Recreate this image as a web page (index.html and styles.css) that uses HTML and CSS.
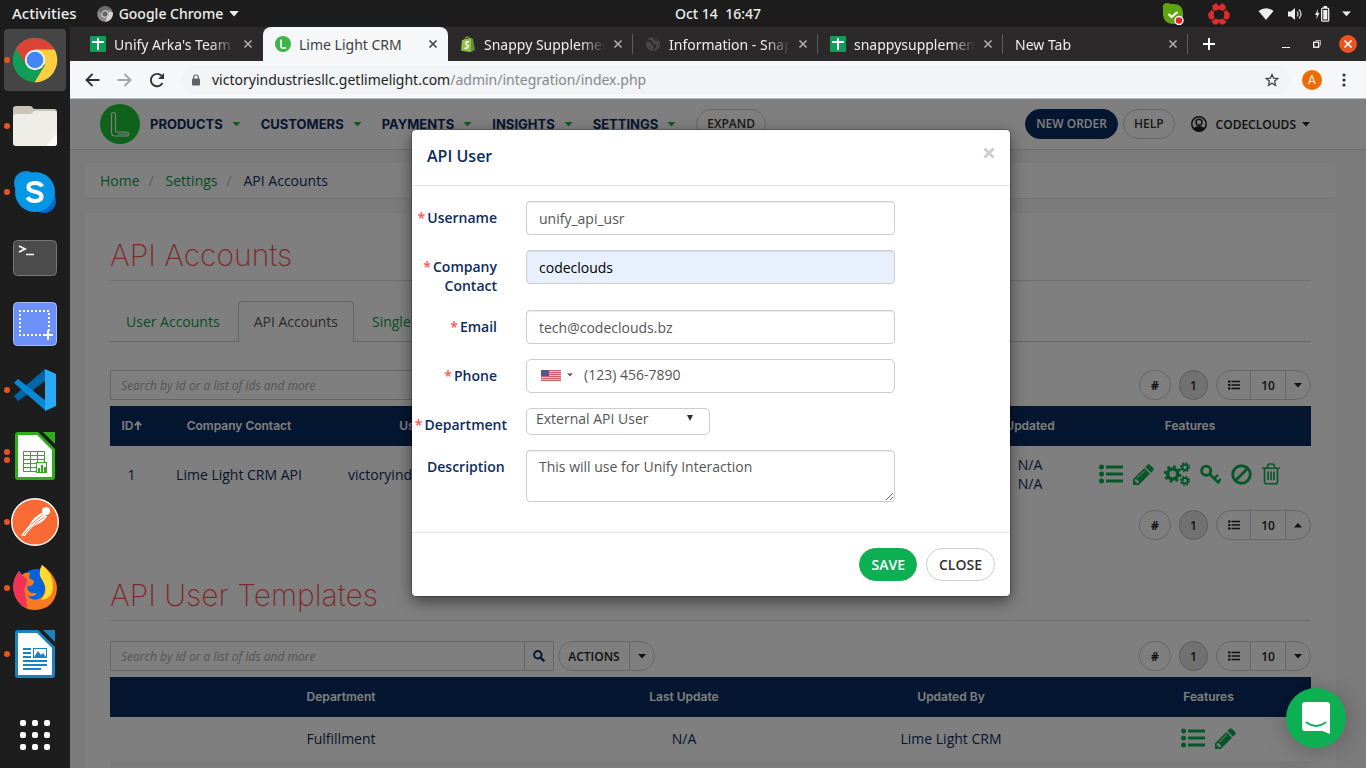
FILE: index.html
```html
<!DOCTYPE html>
<html lang="en">
<head>
<meta charset="utf-8">
<title>Lime Light CRM</title>
<link rel="stylesheet" href="styles.css">
</head>
<body>
<svg class="sprite" aria-hidden="true">
  <symbol id="x" viewBox="0 0 10 10"><path d="M1.500 1.500l7 7M8.500 1.500l-7 7" stroke="currentColor" stroke-width="1.700" fill="none"/></symbol>
  <symbol id="caret" viewBox="0 0 8 5"><path d="M0 0h8L4 4.600z" fill="currentColor"/></symbol>
  <symbol id="caret-up" viewBox="0 0 8 5"><path d="M0 4.600h8L4 0z" fill="currentColor"/></symbol>
  <symbol id="sheet" viewBox="0 0 16 16"><rect width="16" height="16" rx="1" fill="#0f9d58"/><path d="M2 6h12M8 2v12" stroke="#fff" stroke-width="2"/></symbol>
  <symbol id="list" viewBox="0 0 24 20"><g fill="currentColor"><circle cx="2.500" cy="3" r="2.500"/><circle cx="2.500" cy="10" r="2.500"/><circle cx="2.500" cy="17" r="2.500"/><path d="M7 1.500h17v3H7zM7 8.500h17v3H7zM7 15.500h17v3H7z"/></g></symbol>
  <symbol id="pencil" viewBox="128 128 1536 1536"><path fill="currentColor" d="M491 1536l91-91-235-235-91 91v107h128v128h107zm523-928q0-22-22-22-10 0-17 7l-542 542q-7 7-7 17 0 22 22 22 10 0 17-7l542-542q7-7 7-17zm-54-192l416 416-832 832h-416v-416zm683 96q0 53-37 90l-166 166-416-416 166-165q36-38 90-38 53 0 91 38l235 234q37 39 37 91z"/></symbol>
  <symbol id="gears" viewBox="0 0 26 24"><g fill="none" stroke="currentColor"><circle cx="8.700" cy="12" r="5" stroke-width="3.600"/><circle cx="8.700" cy="12" r="7.400" stroke-width="2.800" stroke-dasharray="2.900 2.911"/><circle cx="21" cy="5.200" r="2.700" stroke-width="2"/><circle cx="21" cy="5.200" r="4.200" stroke-width="1.800" stroke-dasharray="1.800 1.499"/><circle cx="21" cy="18.800" r="2.700" stroke-width="2"/><circle cx="21" cy="18.800" r="4.200" stroke-width="1.800" stroke-dasharray="1.800 1.499"/></g></symbol>
  <symbol id="key" viewBox="0 0 22 22"><g fill="none" stroke="currentColor"><circle cx="6.500" cy="7" r="4.800" stroke-width="3"/><path d="M10 10.500l10 9.800" stroke-width="2.800"/><path d="M14.800 15.500l4-4M18.500 19l3.500-3.500" stroke-width="2.600"/></g></symbol>
  <symbol id="ban" viewBox="0 0 22 22"><g fill="none" stroke="currentColor" stroke-width="3"><circle cx="11" cy="11" r="9.200"/><path d="M5 17L17 5"/></g></symbol>
  <symbol id="trash" viewBox="0 0 18 22"><g fill="none" stroke="currentColor" stroke-width="1.600"><path d="M0 5.300h18M2.500 5.300v13.200q0 2.300 1.800 2.300h9.400q1.800 0 1.800-2.300V5.300M5 5l1-3q.4-1 1.400-1h3.200q1 0 1.400 1l1 3M6 8.500v8.500M9 8.500v8.500M12 8.500v8.500"/></g></symbol>
  <symbol id="search" viewBox="0 0 12 12"><circle cx="4.800" cy="4.800" r="3.700" fill="none" stroke="currentColor" stroke-width="2"/><path d="M7.500 7.500l3.800 3.800" stroke="currentColor" stroke-width="2.300"/></symbol>
</svg>

<header class="topbar">
  <button class="top-item activities">Activities</button>
  <button class="top-item app-menu">
    <svg width="16" height="16" viewBox="0 0 16 16"><circle cx="8" cy="8" r="7.800" fill="#8b8b8b"/><path d="M8 4h7A8 8 0 0 0 1.600 4L5 9.500z" fill="#6a6a6a"/><path d="M11.500 6h4.200A8 8 0 0 1 8 15.800L11.500 9z" fill="#d4d4d4"/><circle cx="8" cy="8" r="3.300" fill="#666" stroke="#ddd" stroke-width="1"/></svg>
    Google Chrome
    <svg width="10" height="6" viewBox="0 0 8 5"><use href="#caret"/></svg>
  </button>
  <time class="clock">Oct 14&nbsp; 16:47</time>
  <div class="tray">
    <svg class="tray-skype" width="22" height="22" viewBox="0 0 22 22"><path d="M1 6Q0 1 4 0Q7 0 9 1Q21 0 21 10Q22 21 12 21Q2 21 1 12z" fill="#5fa512"/><path d="M6.500 11l3 3 6-5" stroke="#fff" stroke-width="2.200" fill="none"/><circle cx="17" cy="17.500" r="4" fill="#e22" stroke="#fff" stroke-width="1.400"/></svg>
    <svg class="tray-ring" width="22" height="22" viewBox="0 0 22 22" fill="#dc2d2d"><path d="M4.500 2.500L8 0l3 3 3-3 3.500 2.500v4l-3 1.500q-3.500-3-7 0l-3-1.500z"/><path d="M3.500 7l2.700 2q-1.200 3 .3 5.500L4.500 17 1 15.500 0 11zM18.500 7l-2.700 2q1.200 3-.3 5.500l2 2.500 3.500-1.500 1-4.500z"/><path d="M7.500 15.500q3.500 2 7 0l4 3-2.500 3h-3l-2-2-2 2H6l-2.500-3z"/></svg>
    <svg width="16" height="12" viewBox="0 0 16 12"><path d="M.5 3Q8-2.500 15.500 3L8 12z" fill="#eee"/></svg>
    <svg class="tray-volume" width="15" height="14" viewBox="0 0 15 14"><path d="M0 4.500h3L7 1v12L3 9.500H0z" fill="#eee"/><path d="M9 4.500q2 2.500 0 5M11 2.500q4 4.500 0 9" fill="none" stroke="#ddd" stroke-width="1.200"/></svg>
    <svg class="tray-battery" width="15" height="16" viewBox="0 0 15 16"><path d="M3 3L0 9h2l-.8 4.500L4.500 7H2.600z" fill="#eee"/><rect x="6.700" y="2.200" width="7" height="13" rx="1" fill="none" stroke="#eee" stroke-width="1.300"/><path d="M8.500 0h3.500v2H8.500zM8.300 4h4v9.500h-4z" fill="#eee"/></svg>
    <svg width="9" height="6" viewBox="0 0 8 5"><use href="#caret"/></svg>
  </div>
</header>

<div class="desktop">
  <nav class="dock" aria-label="Dock">
    <button class="dock-item active one" aria-label="Google Chrome"><svg width="46" height="46" viewBox="0 0 46 46"><circle cx="23" cy="23" r="22.300" fill="#109d58"/><path d="M4 11.500A22.300 22.300 0 0 1 42.500 12.500H23L13.500 27z" fill="#db4437"/><path d="M23 12.500h19.600A22.300 22.300 0 0 1 22.500 45.300L33 28z" fill="#ffcd40"/><circle cx="23" cy="23" r="10.200" fill="#f1f1f1"/><circle cx="23" cy="23" r="8.300" fill="#4285f4"/></svg></button>
    <button class="dock-item one" aria-label="Files"><svg width="46" height="42" viewBox="0 0 46 42"><path d="M1 4q0-3 3-3h14q2 0 3 2l1 1h20q3 0 3 3v10H1z" fill="#c9c5b6"/><path d="M1 12q0-3 3-3h14q2 0 3-2 1-1 3-1h18q3 0 3 3v29q0 3-3 3H4q-3 0-3-3z" fill="#efede8"/><path d="M34 41l11-13v10q0 3-3 3z" fill="#fbfbf9"/></svg></button>
    <button class="dock-item one" aria-label="Skype"><svg width="44" height="44" viewBox="0 0 44 44"><circle cx="13" cy="13" r="12" fill="#0c8fdc"/><circle cx="31" cy="31" r="12" fill="#0768c8"/><circle cx="22" cy="22" r="20" fill="#0596e6"/><path d="M29 16.500Q27.500 13 22 13q-6.500 0-6.500 4.300 0 3.200 6.500 4.500t6.500 4.800q0 4.400-6.500 4.400-5.500 0-7.500-3.800" fill="none" stroke="#fff" stroke-width="4.200"/></svg></button>
    <button class="dock-item" aria-label="Terminal"><svg width="44" height="36" viewBox="0 0 44 36"><rect x=".5" y=".5" width="43" height="35" rx="4" fill="#4b4b4b" stroke="#777"/><path d="M6 6l6 3-6 3" fill="none" stroke="#fff" stroke-width="1.800"/><path d="M13 14.500h8" stroke="#fff" stroke-width="1.500"/></svg></button>
    <button class="dock-item" aria-label="Screenshot"><svg width="44" height="44" viewBox="0 0 44 44"><rect x=".5" y=".5" width="43" height="43" rx="4" fill="#6c90f7" stroke="#a5bcfb"/><path d="M6 9h30v20M28 33H7V9" fill="none" stroke="#fff" stroke-width="2" stroke-dasharray="2 2"/><path d="M30 33h10M35 28v10" stroke="#fff" stroke-width="2"/></svg></button>
    <button class="dock-item one" aria-label="Visual Studio Code"><svg width="42" height="42" viewBox="0 0 42 42"><path d="M0 27l4 5L31 12V0z" fill="#0065a9"/><path d="M0 14l4-4 28 22v10z" fill="#0988d6"/><path d="M31 0l11 5v32l-11 5z" fill="#29aaf5"/></svg></button>
    <button class="dock-item two" aria-label="LibreOffice Calc"><svg width="40" height="48" viewBox="0 0 40 48"><path d="M3 0h20l17 17v28q0 3-3 3H3q-3 0-3-3V3q0-3 3-3z" fill="#2fae1a"/><path d="M28 0h12v12z" fill="#2fae1a"/><path d="M3 3h19l15 15v27H3z" fill="#fff"/><path d="M8.500 19.500h21v20h-21zM8.500 23.500h21M8.500 27.500h21M8.500 31.500h21M8.500 35.500h21M15.500 19.500v20M22.500 19.500v20" fill="none" stroke="#2fae1a"/><rect x="21.500" y="30.500" width="10" height="10" fill="#fff" stroke="#2fae1a"/><path d="M23 36h2v4h-2zM26 33h2v7h-2zM29 35h2v5h-2z" fill="#2fae1a"/></svg></button>
    <button class="dock-item one" aria-label="Postman"><svg width="48" height="48" viewBox="0 0 48 48"><circle cx="24" cy="24" r="23.300" fill="#fb6a35" stroke="#fff" stroke-width="1.400"/><circle cx="35" cy="13" r="4" fill="#fff"/><path d="M31.500 14.500Q22 19 18.500 27l-7.500 9-1 2 4.500-.5L15 36l7.500-8q9-3 13.500-9.500z" fill="#fff"/><path d="M20 26.500l12-10M22.500 27l10.500-8M12.500 36.500l8-8" stroke="#fb6a35" stroke-width=".8"/></svg></button>
    <button class="dock-item one" aria-label="Firefox"><svg width="44" height="46" viewBox="0 0 44 46"><circle cx="24" cy="22" r="18" fill="#0a62d8"/><path d="M6 6Q-3 18 2 31q6 14 20 14 20-1 22-21Q44 11 29 0q-5 9 1 16 5 9-1 16-8 6-14-1 9 1 8-3-9 1-9-7 7 1 7-5l-5-3 1-5Q11 7 9 10z" fill="#fb7a1f"/><path d="M6 6Q-3 18 2 31q4 9 12 12-1-12-3-18 3-5 3-11l-5-4z" fill="#f0325a"/><path d="M29 0q-5 9 1 16 6 10-2 19 12-1 12-14Q40 8 29 0z" fill="#ffdc2e"/></svg></button>
    <button class="dock-item one" aria-label="LibreOffice Writer"><svg width="40" height="48" viewBox="0 0 40 48"><path d="M3 0h20l17 17v28q0 3-3 3H3q-3 0-3-3V3q0-3 3-3z" fill="#1a82bd"/><path d="M28 0h12v12z" fill="#1a82bd"/><path d="M3 3h19l15 15v27H3z" fill="#fff"/><path d="M8 19h8M8 23h8M8 27h8M8 31h24M8 35h24M8 39h18" stroke="#1a82bd" stroke-width="2"/><rect x="18.500" y="18.500" width="13" height="9" fill="#fff" stroke="#1a82bd"/><path d="M19 27l4-6 3 4 2-2 3 4z" fill="#1a82bd"/></svg></button>
    <button class="dock-item apps" aria-label="Show Applications"><svg width="30" height="30" viewBox="0 0 30 30" fill="#fff"><rect width="6" height="6" rx="2"/><rect x="12" width="6" height="6" rx="2"/><rect x="24" width="6" height="6" rx="2"/><rect y="12" width="6" height="6" rx="2"/><rect x="12" y="12" width="6" height="6" rx="2"/><rect x="24" y="12" width="6" height="6" rx="2"/><rect y="24" width="6" height="6" rx="2"/><rect x="12" y="24" width="6" height="6" rx="2"/><rect x="24" y="24" width="6" height="6" rx="2"/></svg></button>
  </nav>

  <section class="browser">
    <div class="tabstrip">
      <div class="tab no-sep"><svg width="16" height="16"><use href="#sheet"/></svg><span class="tab-title">Unify Arka's Team</span><button class="tab-close" aria-label="Close tab"><svg width="10" height="10"><use href="#x"/></svg></button></div>
      <div class="tab current"><svg width="16" height="16" viewBox="0 0 40 40"><circle cx="20" cy="20" r="20" fill="#3db54a"/><path d="M15 9v18q0 3 3 3h10" fill="none" stroke="#fff" stroke-width="4"/></svg><span class="tab-title">Lime Light CRM</span><button class="tab-close" aria-label="Close tab"><svg width="10" height="10"><use href="#x"/></svg></button></div>
      <div class="tab"><svg width="16" height="16" viewBox="0 0 16 16"><path d="M2 4l9-2 2 13-4 1-8-1.500z" fill="#95bf47"/><path d="M11 2l2 1 2 11-4 2z" fill="#5e8e3e"/><path d="M4.500 4Q6-.5 8.500 1l1 2" fill="none" stroke="#95bf47"/><path d="M9 6Q6 5 6 7t1.500 2.500T6.500 12.500L4.500 12" fill="none" stroke="#fff" stroke-width="1.500"/></svg><span class="tab-title">Snappy Supplements</span><button class="tab-close" aria-label="Close tab"><svg width="10" height="10"><use href="#x"/></svg></button></div>
      <div class="tab"><svg width="16" height="16" viewBox="0 0 16 16"><circle cx="8" cy="8" r="7" fill="#484748"/><path d="M2 5q4-1 5 2t3 2q1 2-2 4M9 1q0 3 4 3" fill="none" stroke="#2b292a" stroke-width="1.800"/></svg><span class="tab-title">Information - Snappy</span><button class="tab-close" aria-label="Close tab"><svg width="10" height="10"><use href="#x"/></svg></button></div>
      <div class="tab"><svg width="16" height="16"><use href="#sheet"/></svg><span class="tab-title">snappysupplements</span><button class="tab-close" aria-label="Close tab"><svg width="10" height="10"><use href="#x"/></svg></button></div>
      <div class="tab"><span class="tab-title">New Tab</span><button class="tab-close" aria-label="Close tab"><svg width="10" height="10"><use href="#x"/></svg></button></div>
      <button class="new-tab" aria-label="New tab"><svg width="12" height="12" viewBox="0 0 12 12"><path d="M6 0v12M0 6h12" stroke="#fff" stroke-width="2"/></svg></button>
      <div class="window-controls">
        <button aria-label="Minimize"><svg width="8" height="8" viewBox="0 0 8 8"><path d="M0 7.500h8" stroke="#fff"/></svg></button>
        <button aria-label="Restore"><svg width="8" height="8" viewBox="0 0 8 8"><path d="M2.500.5h5v5" fill="none" stroke="#aaa"/><rect x=".7" y="2.200" width="5" height="5" fill="none" stroke="#fff" stroke-width="1.300"/></svg></button>
        <button class="win-close" aria-label="Close"><svg width="10" height="10"><use href="#x"/></svg></button>
      </div>
    </div>
    <div class="toolbar">
      <button aria-label="Back"><svg width="15" height="14" viewBox="0 0 15 14"><path d="M14.500 7H1.500M7.500 1L1.500 7l6 6" fill="none" stroke="#333" stroke-width="1.900"/></svg></button>
      <button aria-label="Forward"><svg width="15" height="14" viewBox="0 0 15 14"><path d="M.5 7h13M7.500 1l6 6-6 6" fill="none" stroke="#a5a6a8" stroke-width="1.900"/></svg></button>
      <button aria-label="Reload"><svg width="16" height="16" viewBox="0 0 16 16"><path d="M13.500 11A6.200 6.200 0 1 1 12.500 3.700" fill="none" stroke="#333" stroke-width="1.900"/><path d="M15 1v6H9z" fill="#333"/></svg></button>
      <div class="omnibox">
        <svg width="8" height="12" viewBox="0 0 8 12"><rect y="4.500" width="8" height="7" rx="1" fill="#5f6368"/><path d="M1.700 5V3q0-2 2.300-2t2.300 2v2" fill="none" stroke="#5f6368" stroke-width="1.200"/></svg>
        <span class="url">victoryindustriesllc.getlimelight.com<span>/admin/integration/index.php</span></span>
        <button aria-label="Bookmark"><svg width="14" height="14" viewBox="0 0 14 14"><path d="M7 1.500l1.600 3.700 4 .4-3 2.700.9 4L7 10.200l-3.500 2.100.9-4-3-2.700 4-.4z" fill="none" stroke="#444" stroke-width="1.300"/></svg></button>
      </div>
      <button class="avatar">A</button>
      <button class="menu" aria-label="Menu"><svg width="4" height="14" viewBox="0 0 4 14" fill="#333"><circle cx="2" cy="2" r="1.600"/><circle cx="2" cy="7" r="1.600"/><circle cx="2" cy="12" r="1.600"/></svg></button>
    </div>

    <div class="viewport">
      <div class="page">
        <header class="navbar">
          <a href="#" class="brand" aria-label="Home"><svg width="40" height="40" viewBox="0 0 40 40"><circle cx="20" cy="20" r="20" fill="#1fc436"/><path d="M11.500 10q0-1.500 2-1.500t2 1.500v17q0 1 1 1h10q2 0 2 2t-2 2H15q-3.500 0-3.500-3.500zM18 30h9" fill="none" stroke="#fff" stroke-width="1.200"/></svg></a>
          <nav class="main-nav">
            <a href="#">PRODUCTS<svg width="9" height="5"><use href="#caret"/></svg></a>
            <a href="#">CUSTOMERS<svg width="9" height="5"><use href="#caret"/></svg></a>
            <a href="#">PAYMENTS<svg width="9" height="5"><use href="#caret"/></svg></a>
            <a href="#">INSIGHTS<svg width="9" height="5"><use href="#caret"/></svg></a>
            <a href="#">SETTINGS<svg width="9" height="5"><use href="#caret"/></svg></a>
          </nav>
          <button class="pill">EXPAND</button>
          <div class="account">
            <button class="pill navy">NEW ORDER</button>
            <button class="pill">HELP</button>
            <button class="user"><svg width="16" height="16" viewBox="0 0 16 16"><circle cx="8" cy="8" r="7.200" fill="none" stroke="#222" stroke-width="1.600"/><circle cx="8" cy="6.300" r="3" fill="none" stroke="#222" stroke-width="1.500"/><path d="M2.500 12.500Q4 10 8 10t5.500 2.500Q11 15.500 8 15.500t-5.500-3z" fill="#222"/></svg>CODECLOUDS<svg width="8" height="5"><use href="#caret"/></svg></button>
          </div>
        </header>

        <main class="main">
          <nav class="breadcrumb"><a href="#">Home</a><i>/</i><a href="#">Settings</a><i>/</i><span>API Accounts</span></nav>
          <div class="panel">
            <h1>API Accounts</h1>
            <div class="nav-tabs"><a href="#">User Accounts</a><a href="#" class="on">API Accounts</a><a href="#">Single Sign On</a></div>
            <div class="tools">
              <input class="search" type="text" aria-label="Search accounts" placeholder="Search by Id or a list of Ids and more">
              <div class="pager"><button class="round">#</button><button class="round num">1</button>
                <div class="group"><button aria-label="List"><svg width="12" height="10"><use href="#list"/></svg></button><button>10</button><button aria-label="Page size"><svg width="8" height="5"><use href="#caret"/></svg></button></div></div>
            </div>
            <table class="grid accounts">
              <colgroup><col class="c-id"><col class="c-company"><col class="c-user"><col><col class="c-updated"><col class="c-features"></colgroup>
              <thead><tr><th>ID<svg width="8" height="9" viewBox="0 0 8 9"><path d="M4 9V1M.8 4.300L4 1l3.200 3.300" fill="none" stroke="currentColor" stroke-width="1.800"/></svg></th><th>Company Contact</th><th>Username</th><th></th><th>Updated</th><th>Features</th></tr></thead>
              <tbody><tr><td>1</td><td>Lime Light CRM API</td><td>victoryindustriesllc_api_1</td><td></td><td>N/A<br>N/A</td><td><div class="icons">
                <a href="#" aria-label="List"><svg width="24" height="20"><use href="#list"/></svg></a><a href="#" aria-label="Edit"><svg width="21" height="21"><use href="#pencil"/></svg></a><a href="#" aria-label="Configure"><svg width="26" height="24"><use href="#gears"/></svg></a><a href="#" aria-label="Reset key"><svg width="21" height="21"><use href="#key"/></svg></a><a href="#" aria-label="Disable"><svg width="21" height="21"><use href="#ban"/></svg></a><a href="#" aria-label="Delete"><svg width="18" height="22"><use href="#trash"/></svg></a></div></td></tr></tbody>
            </table>
            <div class="tools bottom">
              <div class="pager"><button class="round">#</button><button class="round num">1</button>
                <div class="group"><button aria-label="List"><svg width="12" height="10"><use href="#list"/></svg></button><button>10</button><button aria-label="Page size"><svg width="8" height="5"><use href="#caret-up"/></svg></button></div></div>
            </div>
            <h1>API User Templates</h1>
            <div class="tools second">
              <div class="search-group"><input class="search" type="text" aria-label="Search templates" placeholder="Search by Id or a list of Ids and more"><button class="search-btn" aria-label="Search"><svg width="12" height="12"><use href="#search"/></svg></button></div>
              <div class="group actions"><button>ACTIONS</button><button aria-label="More actions"><svg width="8" height="5"><use href="#caret"/></svg></button></div>
              <div class="pager"><button class="round">#</button><button class="round num">1</button>
                <div class="group"><button aria-label="List"><svg width="12" height="10"><use href="#list"/></svg></button><button>10</button><button aria-label="Page size"><svg width="8" height="5"><use href="#caret"/></svg></button></div></div>
            </div>
            <table class="grid templates">
              <colgroup><col class="t-dept"><col class="t-last"><col class="t-by"><col></colgroup>
              <thead><tr><th>Department</th><th>Last Update</th><th>Updated By</th><th>Features</th></tr></thead>
              <tbody><tr><td>Fulfillment</td><td>N/A</td><td>Lime Light CRM</td><td><div class="icons"><a href="#" aria-label="List"><svg width="24" height="20"><use href="#list"/></svg></a><a href="#" aria-label="Edit"><svg width="21" height="21"><use href="#pencil"/></svg></a></div></td></tr>
              <tr class="alt"><td></td><td></td><td></td><td></td></tr></tbody>
            </table>
          </div>
        </main>
      </div>

      <div class="overlay">
        <form class="modal" role="dialog" aria-labelledby="dlg-title">
          <div class="modal-head"><h2 id="dlg-title">API User</h2><button type="button" class="dismiss" aria-label="Close dialog"><svg width="12" height="12" viewBox="0 0 12 12"><path d="M1.500 1.500l9 9M10.500 1.500l-9 9" stroke="currentColor" stroke-width="2.800"/></svg></button></div>
          <div class="modal-body">
            <label for="username"><b>*</b>Username</label><input id="username" type="text" value="unify_api_usr">
            <label for="company"><b>*</b>Company Contact</label><input id="company" class="autofilled" type="text" value="codeclouds">
            <label for="email"><b>*</b>Email</label><input id="email" type="text" value="tech@codeclouds.bz">
            <label for="phone"><b>*</b>Phone</label>
            <div class="phone"><button type="button" aria-label="Country"><svg width="20" height="11" viewBox="0 0 20 11"><rect width="20" height="11" fill="#e9b6bd"/><path d="M0 .5h20M0 2.500h20M0 4.500h20M0 6.500h20M0 8.500h20M0 10.500h20" stroke="#d0606e"/><rect width="8" height="6" fill="#56568e"/></svg><svg width="6" height="4" viewBox="0 0 8 5"><use href="#caret"/></svg></button><input id="phone" type="tel" value="(123) 456-7890"></div>
            <label for="department" class="long"><b>*</b>Department</label>
            <div class="select"><select id="department"><option>External API User</option></select><svg width="6" height="6" viewBox="0 0 6 6"><path d="M0 0h6L3 6z" fill="#333"/></svg></div>
            <label for="description" class="plain">Description</label><textarea id="description">This will use for Unify Interaction</textarea>
          </div>
          <div class="modal-foot"><button type="button" class="save">SAVE</button><button type="button" class="close">CLOSE</button></div>
        </form>
      </div>
      <button class="launcher" aria-label="Chat"><svg width="28" height="32" viewBox="0 0 28 32"><path d="M3 0h22q3 0 3 3v29l-7.500-3H3q-3 0-3-3V3q0-3 3-3z" fill="#fff"/><path d="M4.500 20.500q9.500 7 19 0" fill="none" stroke="#0cb053" stroke-width="1.800" stroke-linecap="round"/></svg></button>
    </div>
  </section>
</div>
</body>
</html>
```
FILE: styles.css
```css
* { box-sizing: border-box; }
body {
  margin: 0;
  height: 100vh;
  display: flex;
  flex-direction: column;
  overflow: hidden;
  background: #1d1d1d;
  font: 14px/19px "Open Sans", "Noto Sans", sans-serif;
  color: #0d2c60;
}
button, input, select, textarea { font: inherit; color: inherit; }
button { padding: 0; border: 0; background: none; display: flex; align-items: center; justify-content: center; }
a { text-decoration: none; }
svg { display: block; flex: none; }
.sprite { position: absolute; width: 0; height: 0; }

/* System bar */
.topbar {
  flex: none;
  height: 27px;
  display: grid;
  grid-template-columns: auto auto 1fr auto;
  align-items: center;
  padding: 0 15px 0 12px;
  position: relative;
  font-family: "Noto Sans", sans-serif;
  font-weight: 500;
  color: #eee;
}
.activities { font-size: 15px; }
.app-menu { margin-left: 20px; gap: 6px; }
.clock { position: absolute; left: 0; right: 0; text-align: center; margin-left: 70px; pointer-events: none; }
.tray { grid-column: 4; display: flex; align-items: center; gap: 12px; }
.tray-ring { margin: 0 16px 0 12px; }
.tray-volume { margin-left: 2px; }

.desktop { flex: 1; min-height: 0; display: flex; }
.dock { flex: none; width: 70px; padding: 2px 4px 18px; display: flex; flex-direction: column; gap: 4px; }
.dock-item { position: relative; height: 62px; border-radius: 4px; }
.dock-item.active { background: #454545; }
.dock-item.apps { margin-top: auto; height: 30px; }
.one::before, .two::before, .two::after {
  content: "";
  position: absolute;
  left: 0;
  top: 28px;
  width: 6px;
  height: 6px;
  border-radius: 50%;
  background: #e95420;
}
.two::before { top: 24px; }
.two::after { top: 32px; }

/* Browser chrome */
.browser { flex: 1; min-width: 0; display: flex; flex-direction: column; }
.tabstrip {
  flex: none;
  height: 34px;
  display: flex;
  padding: 0 9px 0 8px;
  background: #2b292a;
  color: #eee;
  font-family: "Noto Sans", sans-serif;
}
.tab { position: relative; flex: 0 1 185px; min-width: 0; display: flex; align-items: center; gap: 8px; padding: 0 10px 0 12px; }
.tab::after { content: ""; position: absolute; right: 0; top: 7px; height: 20px; border-right: 1px solid #5e5d5d; }
.tab.no-sep::after, .tab.current::after { display: none; }
.tab-title {
  flex: 1;
  overflow: hidden;
  white-space: nowrap;
  -webkit-mask-image: linear-gradient(to right, #000 80%, transparent);
  mask-image: linear-gradient(to right, #000 80%, transparent);
}
.tab-close { color: #aaa; }
.tab.current { background: #f6f7f9; color: #3c4043; border-radius: 8px 8px 0 0; }
.tab.current .tab-title { -webkit-mask-image: none; mask-image: none; }
.tab.current .tab-close { color: #444; }
.new-tab { width: 42px; }
.window-controls { margin-left: auto; display: flex; align-items: center; gap: 13px; }
.window-controls button { width: 18px; height: 18px; }
.window-controls .win-close { border-radius: 50%; background: #e95420; color: #fff; }
.toolbar {
  flex: none;
  height: 38px;
  display: flex;
  align-items: center;
  gap: 17px;
  padding: 0 20px 0 15px;
  background: #f6f7f9;
  border-bottom: 1px solid #b5bfc3;
}
.omnibox { flex: 1; height: 28px; border-radius: 14px; background: #f1f3f4; display: flex; align-items: center; gap: 12px; padding: 0 11px; margin-left: -1px; font-family: "Noto Sans", sans-serif; color: #222; }
.url { flex: 1; }
.url span { color: #85888c; }
.avatar { width: 20px; height: 20px; border-radius: 50%; background: #ef6c00; color: #fff; font: 12px/20px Roboto, sans-serif; margin: 0 3px 0 -5px; }

/* CRM page */
.viewport { flex: 1; min-height: 0; position: relative; overflow: hidden; }
.page { background: #f6f6f6; }
.navbar { height: 51px; display: flex; align-items: center; padding: 0 56px 0 30px; background: #fff; border-bottom: 1px solid #ddd; }
.main-nav { display: flex; gap: 20px; margin: 0 20px 0 10px; }
.main-nav a { display: flex; align-items: center; gap: 9px; font: 700 13px/19px Inter, sans-serif; color: #0d2c60; }
.main-nav svg { color: #1fb836; }
.pill { height: 30px; padding: 0 10px 2px; border: 1px solid #ccc; border-radius: 15px; font-size: 12px; font-weight: 600; color: #333; }
.pill.navy { background: #0a2d62; border-color: #0a2d62; color: #fff; }
.account { margin-left: auto; display: flex; gap: 5px; }
.user { font-size: 12px; font-weight: 600; color: #222; margin-left: 11px; gap: 9px; }
.user svg:last-child { margin-left: -3px; }
.main { padding: 13px 30px 0 15px; }
.breadcrumb { display: flex; padding: 8px 15px; background: #fff; border-bottom: 1px solid #e8e8e8; border-radius: 4px; }
.breadcrumb a, .nav-tabs a { color: #0b9c49; }
.breadcrumb i { width: 26px; padding-left: 9px; color: #bbb; font-style: normal; }
.panel { margin-top: 14px; padding: 25px 25px 0; background: #fff; }
.panel h1 { margin: 0; padding-bottom: 8px; border-bottom: 1px solid #ddd; font: 200 30px/34px Inter, sans-serif; color: #ff5454; }
.nav-tabs { display: flex; margin: 20px 0 28px; border-bottom: 1px solid #ccc; }
.nav-tabs a { padding: 10px 15px; border: 1px solid transparent; border-bottom: 0; }
.nav-tabs .on { margin: 0 2px -1px; background: #fff; border-color: #ccc; border-radius: 4px 4px 0 0; color: #555; }
.tools { display: flex; align-items: center; height: 30px; margin-bottom: 6px; }
.bottom { margin: 6px 0 38px; }
.second { margin-top: 20px; }
.search { width: 415px; height: 30px; padding: 0 10px; border: 1px solid #ccc; background: #fff; font-size: 12px; font-style: italic; outline: 0; }
.search::placeholder { color: #aaa; opacity: 1; }
.search-group { display: flex; margin-right: 4px; }
.search-btn { width: 29px; border: 1px solid #ccc; border-left: 0; color: #0d2c60; }
.pager { margin-left: auto; display: flex; gap: 8px; font-size: 12px; font-weight: 600; color: #222; }
.round { width: 32px; height: 30px; border: 1px solid #ccc; border-radius: 15px; font-weight: 700; }
.round.num { width: 29px; background: #e2e2e2; border-color: #b8b8b8; font-weight: 600; }
.group { display: flex; height: 30px; border: 1px solid #ccc; border-radius: 15px; font-size: 12px; font-weight: 600; color: #222; }
.group button { width: 35px; border-left: 1px solid #ccc; }
.group button:first-child { width: 33px; border-left: 0; }
.group button:last-child { width: 25px; }
.actions button:first-child { width: 70px; }
.grid { width: 100%; border-collapse: collapse; table-layout: fixed; text-align: center; }
.grid th { height: 40px; padding: 0 0 2px; background: #0a2d62; color: #fff; font: 600 12px/19px Inter, sans-serif; }
.grid th svg { display: inline-block; }
.grid td { padding: 9px 0 11px; white-space: nowrap; }
.templates td { height: 44px; }
.alt { background: #f4f4f4; }
.c-id { width: 43px; }
.c-company { width: 172px; }
.c-user { width: 208px; }
.c-updated { width: 78px; }
.c-features { width: 242px; }
.t-dept { width: 462px; }
.t-last { width: 224px; }
.t-by { width: 310px; }
.icons { display: flex; align-items: center; justify-content: center; gap: 10px; }
.accounts .icons { padding-right: 2px; }
.icons a { color: #0cae52; }

/* Dialog */
.overlay { position: absolute; inset: 0; display: flex; justify-content: center; align-items: flex-start; padding: 31px 14px 0 0; background: rgba(0, 0, 0, .5); }
.modal { width: 598px; background: #fff; border-radius: 4px; box-shadow: 0 0 0 1px rgba(0, 0, 0, .2), 0 5px 15px rgba(0, 0, 0, .5); }
.modal-head { display: flex; justify-content: space-between; align-items: flex-start; padding: 15px 15px 17px; border-bottom: 1px solid #e2e4e6; }
.modal-head h2 { margin: 0; font-size: 16px; font-weight: 600; line-height: 23px; }
.dismiss { color: #ccc; margin-top: 2px; }
.modal-body { display: grid; grid-template-columns: 99px minmax(0, 369px); column-gap: 15px; row-gap: 15px; align-items: start; padding: 15px 0 30px; color: #555; }
.modal-body label { padding: 7px 14px 0 0; text-align: right; font-weight: 600; color: #0d2c60; }
.modal-body label b { margin-right: 2px; color: #ff5454; font-weight: 600; }
.modal-body label.long { padding-right: 4px; white-space: nowrap; }
.modal-body label.plain { padding: 7px 0 0 15px; text-align: left; }
.modal-body input, .modal-body textarea { display: block; width: 100%; height: 34px; margin: 0; padding: 6px 12px; border: 1px solid #ccc; border-radius: 4px; background: #fff; box-shadow: inset 0 1px 1px rgba(0, 0, 0, .075); outline: 0; }
.modal-body textarea { height: 52px; resize: vertical; }
.modal-body .autofilled { background: #e8f0fe; color: #000; }
.phone { display: flex; align-items: center; height: 34px; padding-left: 14px; border: 1px solid #ccc; border-radius: 5px; }
.phone button { gap: 6px; padding-bottom: 2px; }
.modal-body .phone input { height: 32px; padding: 4px 11px 8px; border: 0; background: none; box-shadow: none; }
.select { position: relative; width: 184px; height: 27px; border: 1px solid #ccc; border-radius: 5px; }
.select select { display: block; appearance: none; width: 100%; height: 19px; padding: 0 9px; border: 0; background: none; line-height: 19px; outline: 0; }
.select svg { position: absolute; right: 16px; top: 6px; pointer-events: none; }
.modal-foot { display: flex; justify-content: flex-end; gap: 9px; padding: 15px; border-top: 1px solid #e2e4e6; }
.modal-foot button { height: 33px; padding: 0 12px; border: 1px solid #ccc; border-radius: 17px; font-weight: 600; color: #333; }
.modal-foot .save { padding: 0 11px; background: #0cb053; border-color: #0cb053; color: #fff; }
.launcher { position: absolute; right: 20px; bottom: 20px; width: 60px; height: 60px; border-radius: 50%; background: #0cb053; box-shadow: 0 2px 24px rgba(0, 0, 0, .25); }
```
